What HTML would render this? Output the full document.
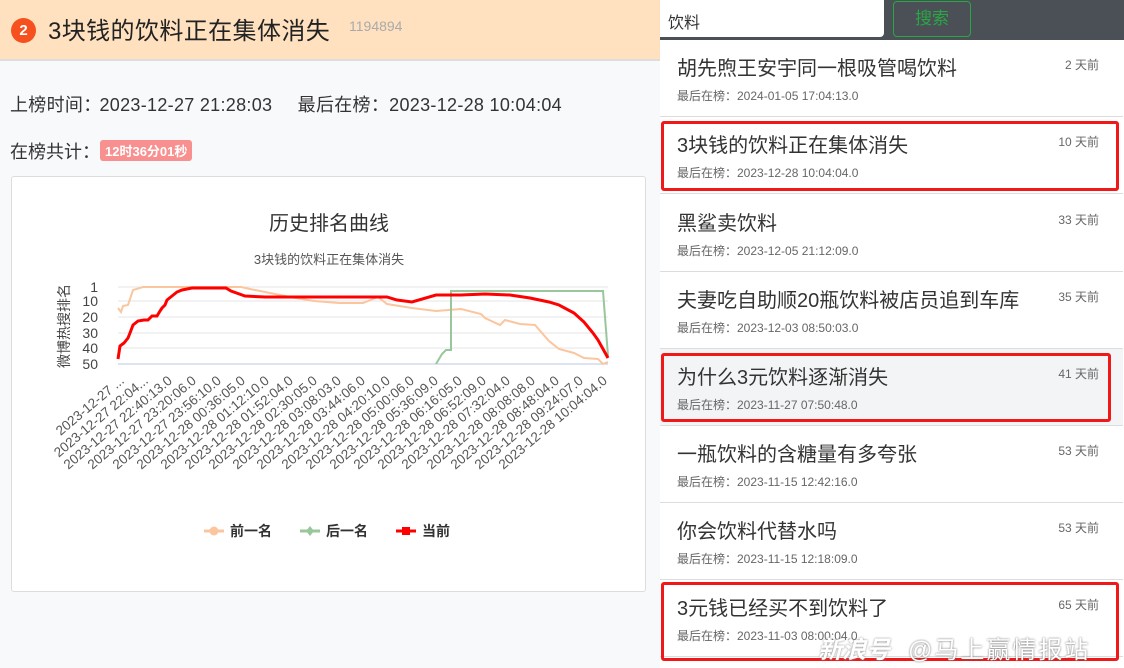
<!DOCTYPE html>
<html><head><meta charset="utf-8"><style>
*{margin:0;padding:0;box-sizing:border-box}
body{width:1124px;height:668px;overflow:hidden;background:#f8f9fb;font-family:"Liberation Sans","Noto Sans CJK SC",sans-serif;position:relative;color:#333}
.hdr{position:absolute;left:0;top:0;width:660px;height:61px;background:#ffe1bf;border-bottom:2px solid #ddd}
.badge{position:absolute;left:11px;top:18px;width:25px;height:25px;border-radius:50%;background:#f5501e;color:#fff;font-size:15px;text-align:center;line-height:25px;font-weight:bold}
.ttl{position:absolute;left:48px;top:11px;font-size:24px;color:#222;letter-spacing:0.4px}
.num{position:absolute;left:349px;top:18px;font-size:14px;color:#aaa}
.t1{position:absolute;left:10px;top:91px;font-size:18px;color:#333;letter-spacing:0.3px}
.t2{position:absolute;left:10px;top:138px;font-size:18px;color:#333}
.pill{display:inline-block;background:#f89090;color:#fff;font-size:13px;font-weight:bold;padding:1px 5px;border-radius:3px;vertical-align:2px}
.card{position:absolute;left:11px;top:176px;width:635px;height:416px;background:#fff;border:1px solid #ddd;border-radius:3px}
.right{position:absolute;left:660px;top:0;width:464px;height:668px;background:#fff}
.bar{position:absolute;left:0;top:0;width:464px;height:40px;background:#4b4f56}
.inp{position:absolute;left:0;top:0;width:224px;height:37px;background:#fff;border-radius:0 0 4px 0;font-size:16px;padding:9px 8px;color:#333}
.btn{position:absolute;left:233px;top:1px;width:78px;height:36px;border:1px solid #28a745;border-radius:4px;color:#28a745;font-size:17px;text-align:center;line-height:34px}
.it{position:absolute;left:0;width:463px;height:77px;border-bottom:1px solid #ddd;background:#fff}
.it .a{position:absolute;left:17px;top:12px;font-size:20px;color:#333}
.it .b{position:absolute;left:17px;top:47px;font-size:12px;color:#666}
.it .c{position:absolute;right:24px;top:16px;font-size:12px;color:#666}
.red{position:absolute;border:3px solid #f01818;border-radius:3px}
</style></head><body>
<div class="hdr"><div class="badge">2</div><div class="ttl">3块钱的饮料正在集体消失</div><div class="num">1194894</div></div>
<div class="t1">上榜时间：<span style="margin-left:-2px">2023-12-27 21:28:03</span> <span style="margin-left:20px">最后在榜：2023-12-28 10:04:04</span></div>
<div class="t2">在榜共计：<span class="pill">12时36分01秒</span></div>
<div class="card"></div>
<svg style="position:absolute;left:0;top:0" width="660" height="668" font-family="Liberation Sans,Noto Sans CJK SC,sans-serif">
<text x="329" y="230" font-size="20" fill="#333" text-anchor="middle">历史排名曲线</text>
<text x="329" y="264" font-size="13" fill="#555" text-anchor="middle">3块钱的饮料正在集体消失</text>
<g stroke="#e6e6e6" stroke-width="1"><line x1="118" y1="287" x2="608" y2="287"/><line x1="118" y1="301" x2="608" y2="301"/><line x1="118" y1="317" x2="608" y2="317"/><line x1="118" y1="333" x2="608" y2="333"/><line x1="118" y1="348" x2="608" y2="348"/></g>
<line x1="118" y1="364" x2="608" y2="364" stroke="#b8c8e8"/>
<g font-size="14" fill="#444" text-anchor="end"><text x="98" y="292">1</text><text x="98" y="306">10</text><text x="98" y="322">20</text><text x="98" y="338">30</text><text x="98" y="353">40</text><text x="98" y="369">50</text></g>
<text transform="translate(69,326) rotate(-90)" font-size="14" fill="#444" text-anchor="middle">微博热搜排名</text>
<polyline fill="none" stroke="#fbc59e" stroke-width="2" points="118,308 121,312 123,306 128,305 131,296 133,290 143,287 241,287 250,289 255,290 290,297 314,301 339,303 363,303 378,297 387,304 412,308 436,311 461,309 481,314 485,318 500,325 505,320 520,324 535,325 549,341 559,349 574,353 584,358 598,359 603,364 608,362"/>
<polyline fill="none" stroke="#99c79b" stroke-width="2" points="436,364 442,354 446,350 451,350 451,291 603,291 608,356"/>
<polyline fill="none" stroke="#f00" stroke-width="3" points="118,359 120,346 124,343 128,338 130,333 133,325 138,321 144,320 148,320 152,316 157,316 160,311 162,308 165,305 167,300 172,296 177,292 182,290 192,288 226,288 231,291 245,296 265,297 314,297 387,297 397,300 412,302 436,295 461,295 485,294 510,295 530,298 549,302 559,305 574,313 584,322 593,333 598,340 603,349 608,358"/>
<g font-size="13.5" fill="#555" text-anchor="end">
<text transform="translate(125,382) rotate(-40)">2023-12-27 ...</text>
<text transform="translate(149,382) rotate(-40)">2023-12-27 22:04...</text>
<text transform="translate(173,382) rotate(-40)">2023-12-27 22:40:13.0</text>
<text transform="translate(197,382) rotate(-40)">2023-12-27 23:20:06.0</text>
<text transform="translate(222,382) rotate(-40)">2023-12-27 23:56:10.0</text>
<text transform="translate(246,382) rotate(-40)">2023-12-28 00:36:05.0</text>
<text transform="translate(270,382) rotate(-40)">2023-12-28 01:12:10.0</text>
<text transform="translate(294,382) rotate(-40)">2023-12-28 01:52:04.0</text>
<text transform="translate(318,382) rotate(-40)">2023-12-28 02:30:05.0</text>
<text transform="translate(342,382) rotate(-40)">2023-12-28 03:08:03.0</text>
<text transform="translate(366,382) rotate(-40)">2023-12-28 03:44:06.0</text>
<text transform="translate(391,382) rotate(-40)">2023-12-28 04:20:10.0</text>
<text transform="translate(415,382) rotate(-40)">2023-12-28 05:00:06.0</text>
<text transform="translate(439,382) rotate(-40)">2023-12-28 05:36:09.0</text>
<text transform="translate(463,382) rotate(-40)">2023-12-28 06:16:05.0</text>
<text transform="translate(487,382) rotate(-40)">2023-12-28 06:52:09.0</text>
<text transform="translate(511,382) rotate(-40)">2023-12-28 07:32:04.0</text>
<text transform="translate(536,382) rotate(-40)">2023-12-28 08:08:08.0</text>
<text transform="translate(560,382) rotate(-40)">2023-12-28 08:48:04.0</text>
<text transform="translate(584,382) rotate(-40)">2023-12-28 09:24:07.0</text>
<text transform="translate(608,382) rotate(-40)">2023-12-28 10:04:04.0</text>
</g>
<g font-size="14" fill="#333" font-weight="bold"><line x1="204" y1="531" x2="224" y2="531" stroke="#fbc59e" stroke-width="3"/><circle cx="214" cy="531" r="4.5" fill="#fbc59e"/><text x="230" y="536">前一名</text>
<line x1="300" y1="531" x2="320" y2="531" stroke="#99c79b" stroke-width="3"/><path d="M310 526 L314 531 L310 536 L306 531Z" fill="#99c79b"/><text x="326" y="536">后一名</text>
<line x1="396" y1="531" x2="416" y2="531" stroke="#f00" stroke-width="3"/><rect x="402" y="527" width="8" height="8" fill="#f00"/><text x="422" y="536">当前</text></g>
</svg>
<div class="right">
<div class="bar"></div>
<div class="inp">饮料</div>
<div class="btn">搜索</div>
<div class="it" style="top:40px"><div class="a">胡先煦王安宇同一根吸管喝饮料</div><div class="b">最后在榜：2024-01-05 17:04:13.0</div><div class="c">2 天前</div></div>
<div class="it" style="top:117px"><div class="a">3块钱的饮料正在集体消失</div><div class="b">最后在榜：2023-12-28 10:04:04.0</div><div class="c">10 天前</div></div>
<div class="it" style="top:195px"><div class="a">黑鲨卖饮料</div><div class="b">最后在榜：2023-12-05 21:12:09.0</div><div class="c">33 天前</div></div>
<div class="it" style="top:272px"><div class="a">夫妻吃自助顺20瓶饮料被店员追到车库</div><div class="b">最后在榜：2023-12-03 08:50:03.0</div><div class="c">35 天前</div></div>
<div class="it" style="top:349px;background:#f3f4f6"><div class="a">为什么3元饮料逐渐消失</div><div class="b">最后在榜：2023-11-27 07:50:48.0</div><div class="c">41 天前</div></div>
<div class="it" style="top:426px"><div class="a">一瓶饮料的含糖量有多夸张</div><div class="b">最后在榜：2023-11-15 12:42:16.0</div><div class="c">53 天前</div></div>
<div class="it" style="top:503px"><div class="a">你会饮料代替水吗</div><div class="b">最后在榜：2023-11-15 12:18:09.0</div><div class="c">53 天前</div></div>
<div class="it" style="top:580px"><div class="a">3元钱已经买不到饮料了</div><div class="b">最后在榜：2023-11-03 08:00:04.0</div><div class="c">65 天前</div></div>
<div class="red" style="left:1px;top:121px;width:458px;height:70px"></div>
<div class="red" style="left:1px;top:353px;width:450px;height:69px"></div>
<div class="red" style="left:1px;top:582px;width:458px;height:79px"></div>
<div style="position:absolute;left:158px;top:630px;font-size:24px;color:#fff;font-style:italic;font-weight:bold;text-shadow:0 0 2px #888">新浪号</div>
<div style="position:absolute;left:248px;top:630px;font-size:24px;color:#fff;text-shadow:0 0 2px #666;letter-spacing:2px">@马上赢情报站</div>
</div>
</body></html>
